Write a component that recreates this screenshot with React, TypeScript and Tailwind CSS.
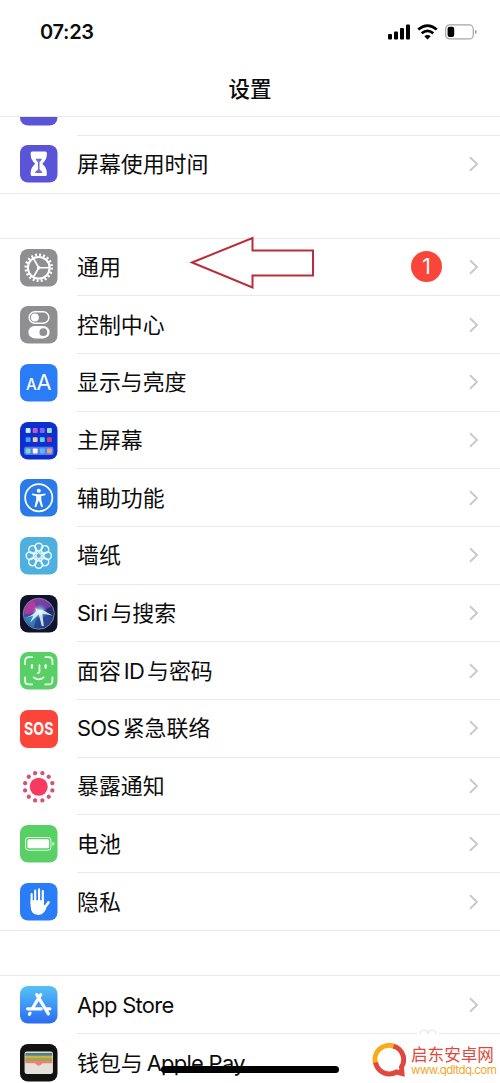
import React from 'react';

const APP_ICON = 'w-[37.5px] h-[37.5px] shrink-0 block overflow-visible';

const Chevron: React.FC = () => (
  <svg className="h-[16px] w-[10px] shrink-0" viewBox="0 0 10 16" fill="none" stroke="#c9c9cb" strokeWidth="1.9">
    <path d="M1 1.2 8 8 1 14.8" />
  </svg>
);

const Tile: React.FC<{ fill: string; children?: React.ReactNode }> = ({ fill, children }) => (
  <svg className={APP_ICON} viewBox="0 0 37 37" fill="none">
    <rect width="37" height="37" rx="8" fill={fill} />
    {children}
  </svg>
);

const HourglassIcon = () => (
  <Tile fill="#5a55d8">
    <path
      d="M12 6.500H25Q26.500 6.500 26.500 8C26.500 13 25.500 15 22 18.500C25.500 22 26.500 24 26.500 29Q26.500 30.500 25 30.500H12Q10.500 30.500 10.500 29C10.500 24 11.500 22 15 18.500C11.500 15 10.500 13 10.500 8Q10.500 6.500 12 6.500Z"
      fill="#fff"
    />
    <path d="M15.300 13.500h6.400q-.6 1.800-2.400 3.300v7.400q2 1.400 3 3.400h-7.600q1-2 3-3.400v-7.400q-1.800-1.500-2.400-3.300Z" fill="#6f6be0" />
  </Tile>
);

const GearIcon = () => (
  <Tile fill="#8f8f92">
    <circle cx="18.500" cy="18.500" r="12.800" stroke="#fff" strokeWidth="2.600" strokeDasharray="1.920 2.101" />
    <circle cx="18.500" cy="18.500" r="10.700" stroke="#fff" strokeWidth="2" />
    <path d="M18.500 18.500h10M18.500 18.500l-5-8.700M18.500 18.500l-5 8.700" stroke="#fff" strokeWidth="1.700" />
    <circle cx="18.500" cy="18.500" r="1.800" fill="#fff" />
  </Tile>
);

const ControlIcon = () => (
  <Tile fill="#8f8f92">
    <rect x="9" y="5.700" width="19.500" height="11.300" rx="5.650" stroke="#fff" strokeWidth="1.400" />
    <circle cx="14.700" cy="11.350" r="3.900" fill="#fff" />
    <rect x="8.300" y="19.700" width="20.900" height="12.300" rx="6.150" fill="#fff" />
    <circle cx="23" cy="25.850" r="3.800" fill="#8f8f92" />
  </Tile>
);

const DisplayIcon = () => (
  <Tile fill="#2a7df6">
    <g fill="#fff" fontFamily="Inter, sans-serif">
      <text x="5.800" y="25.800" fontSize="16" fontWeight="500" textLength="10.600" lengthAdjust="spacingAndGlyphs">A</text>
      <text x="16.400" y="25.800" fontSize="21" textLength="14.800" lengthAdjust="spacingAndGlyphs">A</text>
    </g>
  </Tile>
);

const homeDots = [
  ['#cfeefc', '#c45bc8', '#8a5cf0', '#a5dcc0'],
  ['#48a3f0', '#f0cba0', '#62d3ea', '#d43b78'],
  ['#7adcc4', '#ffffff', '#5ab8f5', '#e3a08c'],
];

const HomeScreenIcon = () => (
  <Tile fill="#0c2fd0">
    <rect x="4" y="24.500" width="29" height="8" rx="2" fill="#5b7be6" />
    {homeDots.map((row, r) =>
      row.map((color, c) => (
        <rect key={`${r}-${c}`} x={5.600 + c * 7} y={[6, 15, 26.200][r]} width="4.800" height="4.800" rx="0.800" fill={color} />
      ))
    )}
  </Tile>
);

const AccessibilityIcon = () => (
  <Tile fill="#2a7ae8">
    <circle cx="18.500" cy="18.500" r="13.400" stroke="#fff" strokeWidth="1.700" />
    <circle cx="18.500" cy="11.500" r="2" fill="#fff" />
    <path
      d="M12 14.200l4.500.8h4l4.500-.8.3 1.500-4.300 1.300v3.500l1.700 7-1.700.4-2.300-6.400h-.4l-2.300 6.400-1.700-.4 1.700-7v-3.500l-4.300-1.300Z"
      fill="#fff"
    />
  </Tile>
);

const petals = [0, 45, 90, 135, 180, 225, 270, 315];

const WallpaperIcon = () => (
  <Tile fill="#4fb0e0">
    {petals.map((angle) => (
      <g key={angle} transform={`rotate(${angle} 18.500 18.500)`}>
        <circle cx="18.500" cy="9.800" r="3.700" stroke="#e8f7fd" strokeWidth="1.500" />
        <path d="M18.500 15.500l-3-4M18.500 15.500l3-4" stroke="#e8f7fd" strokeWidth="1.100" />
      </g>
    ))}
    <circle cx="18.500" cy="18.500" r="2.600" stroke="#e8f7fd" strokeWidth="1" />
  </Tile>
);

const SiriIcon = () => (
  <Tile fill="#11132c">
    <defs>
      <linearGradient id="siri" x1="0.300" y1="0" x2="0.550" y2="1">
        <stop offset="0" stopColor="#8a3f9c" />
        <stop offset="0.400" stopColor="#6a3fa8" />
        <stop offset="0.600" stopColor="#2d4a94" />
        <stop offset="1" stopColor="#243f8c" />
      </linearGradient>
      <radialGradient id="siriGlow">
        <stop offset="0" stopColor="#fff" />
        <stop offset="0.300" stopColor="#b8f2ff" stopOpacity="0.700" />
        <stop offset="1" stopColor="#54cdf0" stopOpacity="0" />
      </radialGradient>
    </defs>
    <circle cx="18.500" cy="18.500" r="15.300" fill="url(#siri)" stroke="#8493ae" strokeWidth="0.800" />
    <path d="M19 17 4.500 19Q5 9 13 5Z" fill="#d63a9a" opacity="0.600" />
    <path d="M18 18 4.500 22q2 7 9 10Z" fill="#30b8cf" opacity="0.500" />
    <path d="M20 17l11-6q4 6 1 11Z" fill="#172557" opacity="0.700" />
    <circle cx="19.500" cy="16.500" r="7.500" fill="url(#siriGlow)" />
    <path d="M5.500 22.500Q13 20 16 15.500L15 12.500 18.500 14.500 22 14.500 32.500 20.500 22 18.500 23.500 30.500 21.500 30.500 18.500 19 10 27.500 13 20.500Z" fill="#e8fcff" opacity="0.850" />
  </Tile>
);

const FaceIdIcon = () => (
  <Tile fill="#58d066">
    <g stroke="#f2fff3" strokeWidth="1.700" strokeLinecap="round">
      <path d="M5 12V9q0-4 4-4h3M25 5h3q4 0 4 4v3M32 25v3q0 4-4 4h-3M12 32H9q-4 0-4-4v-3" />
      <path d="M11.800 13v2.600M25.300 13v2.600" strokeWidth="2.200" />
      <path d="M19.200 13v6.300q0 1.600-1.800 1.600" />
      <path d="M13.500 25q5 4 9.800 0" />
    </g>
  </Tile>
);

const SosIcon = () => (
  <div className="flex h-[37.5px] w-[37.5px] items-center justify-center rounded-[8px] bg-[#f9453a]">
    <span className="scale-x-[0.78] text-[18px] font-bold leading-[22px] text-white">SOS</span>
  </div>
);

const ExposureIcon = () => (
  <Tile fill="#fff">
    <circle cx="18.500" cy="18.500" r="8.900" fill="#f83a62" />
    {Array.from({ length: 12 }, (_, i) => (
      <circle key={i} cx="18.500" cy="4.600" r="2.150" fill="#d65376" transform={`rotate(${15 + i * 30} 18.500 18.500)`} />
    ))}
  </Tile>
);

const BatteryIcon = () => (
  <Tile fill="#58d066">
    <rect x="5.500" y="12.300" width="25" height="12.500" rx="3" stroke="#d8f7dc" strokeWidth="1" />
    <rect x="7.300" y="14.100" width="21.400" height="8.900" rx="1.500" fill="#fff" />
    <path d="M32 16.600q2 .4 2 2t-2 2Z" fill="#d8f7dc" />
  </Tile>
);

const HandIcon = () => (
  <Tile fill="#2a7df6">
    <g stroke="#fff" strokeLinecap="round" strokeWidth="2.100">
      <path d="M11.500 20v-9M15 18V7.500M18.800 18V6.200M22.500 19V8" />
      <path d="M24 25l4.200-6" strokeWidth="2.500" />
    </g>
    <path d="M10.450 17h13.100v4.500l2.800.8q-1.500 9.200-8 9.200-7.900 0-7.900-9Z" fill="#fff" />
  </Tile>
);

const AppStoreIcon = () => (
  <Tile fill="url(#store)">
    <defs>
      <linearGradient id="store" x1="0" y1="0" x2="0" y2="1">
        <stop offset="0" stopColor="#56c2f7" />
        <stop offset="1" stopColor="#2a6cf0" />
      </linearGradient>
    </defs>
    <g stroke="#fff" strokeWidth="3.100" strokeLinecap="round">
      <path d="M20.500 8.500 12 22.500M16.500 8.500l11.500 19M7.500 22.500h13.500M25.500 22.500h4" />
      <path d="M10 26.700l-.7 1.200" />
    </g>
  </Tile>
);

const WalletIcon = () => (
  <Tile fill="#121212">
    <rect x="4.500" y="7.500" width="28" height="22" rx="2" fill="#e4e2d8" />
    <path d="M5.300 8.800h26.400V12H5.300Z" fill="#4f7f91" />
    <path d="M5.300 11.500h26.400V15H5.300Z" fill="#cdb04a" />
    <path d="M5.300 14h26.400v3.500H5.300Z" fill="#93a94e" />
    <path d="M5.300 16.500h26.400V19h-8.700q-1.200 0-1.800 1-2.700 2.800-5.400 0-.6-1-1.800-1H5.300Z" fill="#f08078" />
  </Tile>
);

interface RowProps {
  icon: React.ReactNode;
  label: React.ReactNode;
  badge?: number;
  last?: boolean;
}

const Row: React.FC<RowProps> = ({ icon, label, badge, last }) => (
  <div className={`flex shrink-0 pl-[20.3px] ${last ? 'h-[57px]' : 'h-[57.7px]'}`}>
    <div className="flex w-[56.7px] items-center">{icon}</div>
    <div className={`flex flex-1 items-center pr-[21px] ${last ? '' : 'border-b border-[#e9e9ea]'}`}>
      <span className="flex-1 whitespace-nowrap pt-[2px] text-[21.9px] leading-none">{label}</span>
      {badge !== undefined && (
        <span className="mr-[27px] flex h-[31px] w-[31px] items-center justify-center rounded-full bg-[#fa453a] text-[21px] text-white">
          {badge}
        </span>
      )}
      <Chevron />
    </div>
  </div>
);

// latin runs are set a little tighter than the Chinese text round them
const Latin: React.FC<{ children: string; className?: string }> = ({ children, className = '' }) => (
  <span className={`tracking-[-0.7px] ${className}`}>{children}</span>
);

const StatusBar: React.FC = () => (
  <div className="flex h-16 items-center justify-between pl-10 pr-[23px]">
    <span className="text-[20px] font-semibold leading-none tracking-[-0.3px]">07:23</span>
    <div className="flex items-center">
      <svg className="h-4 w-[23px]" viewBox="0 0 23 16" fill="#000">
        <rect x="0" y="10" width="4" height="5.500" rx="1" />
        <rect x="6" y="7.500" width="4" height="8" rx="1" />
        <rect x="12" y="4" width="4" height="11.500" rx="1" />
        <rect x="18" y="0.500" width="4" height="15" rx="1" />
      </svg>
      <svg className="ml-1.5 h-4 w-[21px]" viewBox="0 0 21 16" fill="none" stroke="#000" strokeWidth="2.700">
        <path d="M1.200 5.600q9.300-8 18.600 0" />
        <path d="M4.700 9.300q5.800-5 11.600 0" />
        <path d="M7.300 12.300q3.200-2.500 6.400 0L10.500 15.500Z" fill="#000" stroke="none" />
      </svg>
      <svg className="ml-[7px] h-4 w-[32px]" viewBox="0 0 32 16" fill="none">
        <rect x="0.700" y="0.900" width="27.600" height="14" rx="4" stroke="#a5a5a5" strokeWidth="1.200" />
        <rect x="2.600" y="2.800" width="6.600" height="10.200" rx="2" fill="#000" />
        <path d="M30 5.800q1.800.6 1.800 2.200T30 10.200Z" fill="#a5a5a5" />
      </svg>
    </div>
  </div>
);

const SiteMark: React.FC = () => (
  <div className="absolute left-[372px] top-[1041px] flex items-center gap-[5px]">
    <svg className="h-[37px] w-[34px]" viewBox="0 0 34 37" fill="none" strokeWidth="5">
      <path d="M22.500 5.500A14 14 0 0 0 3.800 23" stroke="#f8ac1b" />
      <path d="M3.600 21.500A14 14 0 0 0 24.500 31L30 32.500 29.500 26A14 14 0 0 0 21.500 5.100" stroke="#df493c" />
    </svg>
    <div className="flex flex-col whitespace-nowrap pt-[2px]">
      <span className="text-[16.6px] leading-[18px] text-[#df493c]">启东安卓网</span>
      <span className="text-[11.5px] leading-[12px] tracking-[-0.5px] text-[#f3a62a]">www.qdltdq.com</span>
    </div>
  </div>
);

const App: React.FC = () => {
  return (
    <div className="relative flex h-[1083px] w-[500px] flex-col overflow-hidden bg-white font-['Inter','Noto_Sans_CJK_SC',sans-serif] text-[#0c0c0c]">
      <header className="h-[117px] shrink-0 border-b border-[#e9e9ea]">
        <StatusBar />
        <h1 className="pt-[14px] text-center text-[21.5px] font-medium leading-[22px]">设置</h1>
      </header>

      <main className="min-h-0 flex-1 overflow-hidden">
        <section className="-mt-[39.2px] border-b border-[#e9e9ea]">
          <Row icon={<Tile fill="#5a55d8" />} label={<span className="relative -top-[2px]">勿扰模式</span>} />
          <Row icon={<HourglassIcon />} label="屏幕使用时间" last />
        </section>

        <section className="mt-[44px] border-y border-[#e9e9ea]">
          <Row icon={<GearIcon />} label="通用" badge={1} />
          <Row icon={<ControlIcon />} label="控制中心" />
          <Row icon={<DisplayIcon />} label="显示与亮度" />
          <Row icon={<HomeScreenIcon />} label="主屏幕" />
          <Row icon={<AccessibilityIcon />} label="辅助功能" />
          <Row icon={<WallpaperIcon />} label="墙纸" />
          <Row icon={<SiriIcon />} label={<><Latin className="mr-[3px]">Siri</Latin>与搜索</>} />
          <Row icon={<FaceIdIcon />} label={<>面容<Latin className="ml-[3px] mr-[3px]">ID</Latin>与密码</>} />
          <Row icon={<SosIcon />} label={<><Latin className="mr-[3px]">SOS</Latin>紧急联络</>} />
          <Row icon={<ExposureIcon />} label="暴露通知" />
          <Row icon={<BatteryIcon />} label="电池" />
          <Row icon={<HandIcon />} label="隐私" last />
        </section>

        <section className="mt-[44.3px] border-t border-[#e9e9ea]">
          <Row icon={<AppStoreIcon />} label={<Latin>App Store</Latin>} />
          <div className="flex h-[57px] pl-[20.3px]">
            <div className="flex w-[56.7px] items-center">
              <WalletIcon />
            </div>
            <span className="self-center pt-[2px] text-[21.9px] leading-none">
              钱包与<Latin className="ml-[4px]">Apple Pay</Latin>
            </span>
          </div>
        </section>
      </main>

      {/* hand-drawn pointer to the first row */}
      <svg className="absolute left-[188px] top-[234px] h-[58px] w-[130px]" viewBox="0 0 130 58" fill="none">
        <path d="M4 28.500 64.500 4v12.500H125v25H64.500v12Z" stroke="#b92d3b" strokeWidth="2" />
      </svg>

      {/* home indicator */}
      <div className="absolute left-[161px] top-[1066px] h-[7px] w-[178px] rounded-full bg-black" />
      <svg className="absolute left-[417px] top-[1027px] h-[8px] w-[22px] bg-white" viewBox="0 0 22 8" fill="none" stroke="#e4e4e4">
        <path d="M3 7q0-4 4-4t4 4q0-4 4-4t4 4" />
      </svg>
      <SiteMark />
    </div>
  );
};

export default App;
